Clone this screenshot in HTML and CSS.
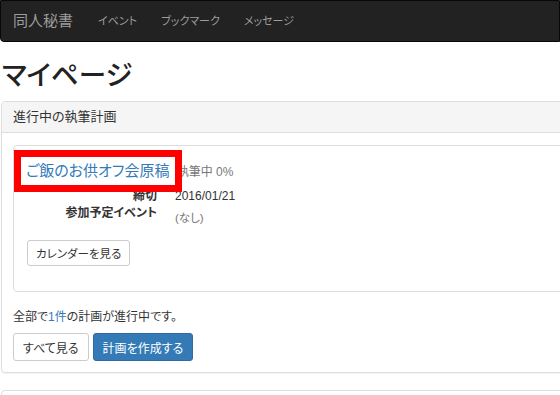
FILE: index.html
```html
<!DOCTYPE html>
<html lang="ja">
<head>
    <meta charset="UTF-8">
    <meta name="viewport" content="width=device-width, initial-scale=1.0">
    <title>マイページ - 同人秘書</title>
    <link rel="stylesheet" href="styles.css">
</head>
<body>
    <nav class="navbar">
        <a class="brand" href="#">同人秘書</a>
        <ul class="nav">
            <li><a href="#">イベント</a></li>
            <li><a href="#">ブックマーク</a></li>
            <li><a href="#">メッセージ</a></li>
        </ul>
    </nav>

    <div class="container">
        <h1>マイページ</h1>

        <div class="panel">
            <div class="panel-heading">進行中の執筆計画</div>
            <div class="panel-body">
                <!-- 計画カード -->
                <div class="plan">
                    <div class="plan-title">
                        <a class="marked" href="#">ご飯のお供オフ会原稿</a>
                        <span class="status">執筆中 0%</span>
                    </div>
                    <dl class="plan-info">
                        <dt>締切</dt>
                        <dd>2016/01/21</dd>
                        <dt>参加予定イベント</dt>
                        <dd class="muted">(なし)</dd>
                    </dl>
                    <button class="btn">カレンダーを見る</button>
                </div>

                <p class="summary">全部で<a href="#">1件</a>の計画が進行中です。</p>
                <div class="actions">
                    <button class="btn">すべて見る</button>
                    <button class="btn btn-primary">計画を作成する</button>
                </div>
            </div>
        </div>

        <div class="panel panel-next"></div>
    </div>
</body>
</html>
```

FILE: styles.css
```css
html, body {
    overflow: hidden;
}

body {
    margin: 0;
    font-family: "Liberation Sans", "Noto Sans CJK JP", sans-serif;
    font-size: 12px;
    color: #333;
    background: #fff;
    font-feature-settings: "palt";
}

a {
    color: #337ab7;
    text-decoration: none;
}

/* ナビゲーション */
.navbar {
    box-sizing: border-box;
    height: 42px;
    display: flex;
    align-items: center;
    background: #222;
    border: 1px solid #080808;
    border-radius: 0 0 0 4px;
    padding-left: 12px;
}

.brand {
    color: #9d9d9d;
    font-size: 15px;
    line-height: 20px;
}

.nav {
    display: flex;
    gap: 24px;
    margin: 0 0 0 25px;
    padding: 0;
    list-style: none;
}

.nav a {
    color: #9d9d9d;
    font-size: 11px;
    line-height: 20px;
}

/* 本体 */
.container {
    width: 640px;
    padding-left: 1px;
}

h1 {
    margin: 19px 0 10px 1px;
    font-size: 27.5px;
    font-weight: 500;
    line-height: 30px;
    color: #222;
}

.panel {
    border: 1px solid #ddd;
    border-radius: 4px;
    box-shadow: 0 1px 1px rgba(0,0,0,0.05);
}

.panel-heading {
    height: 30px;
    line-height: 30px;
    padding: 0 11px;
    font-size: 13px;
    background: #f5f5f5;
    border-bottom: 1px solid #ddd;
    border-radius: 3px 3px 0 0;
}

.panel-body {
    padding: 12px 11px 11px;
}

.plan {
    border: 1px solid #ddd;
    border-radius: 4px;
    padding: 11px 12px 25px;
}

.plan-title {
    height: 28px;
    line-height: 28px;
}

.marked {
    position: relative;
    display: inline-block;
    font-size: 15px;
}

/* 赤枠の注記 */
.marked::after {
    content: "";
    position: absolute;
    top: -7px;
    bottom: -7px;
    left: -12px;
    right: -13px;
    border: 7px solid #ff0000;
    z-index: 1;
}

.status {
    margin-left: 4px;
    color: #777;
    font-size: 12px;
}

.plan-info {
    display: grid;
    grid-template-columns: 131px 1fr;
    column-gap: 18px;
    margin: 3px 0 0;
    line-height: 17px;
}

.plan-info dt {
    text-align: right;
    font-weight: bold;
}

.plan-info dd {
    margin: 0;
}

.plan-info .muted {
    padding-top: 5px;
    color: #777;
    font-size: 11.5px;
}

.btn {
    box-sizing: border-box;
    height: 26px;
    padding: 0 9px;
    font-family: inherit;
    font-size: 12px;
    font-feature-settings: "palt";
    color: #333;
    background: #fff;
    border: 1px solid #ccc;
    border-radius: 3px;
    cursor: pointer;
}

.plan .btn {
    margin-top: 13px;
    margin-left: 1px;
    font-size: 11.5px;
    padding: 0 8px;
}

.summary {
    margin: 16px 0 7px;
    line-height: 18px;
}

.actions {
    display: flex;
    gap: 4px;
}

.actions .btn {
    height: 28px;
    padding: 0 9px;
}

.btn-primary {
    color: #fff;
    background: #337ab7;
    border-color: #2e6da4;
}

.panel-next {
    margin-top: 17px;
    height: 40px;
}
```
